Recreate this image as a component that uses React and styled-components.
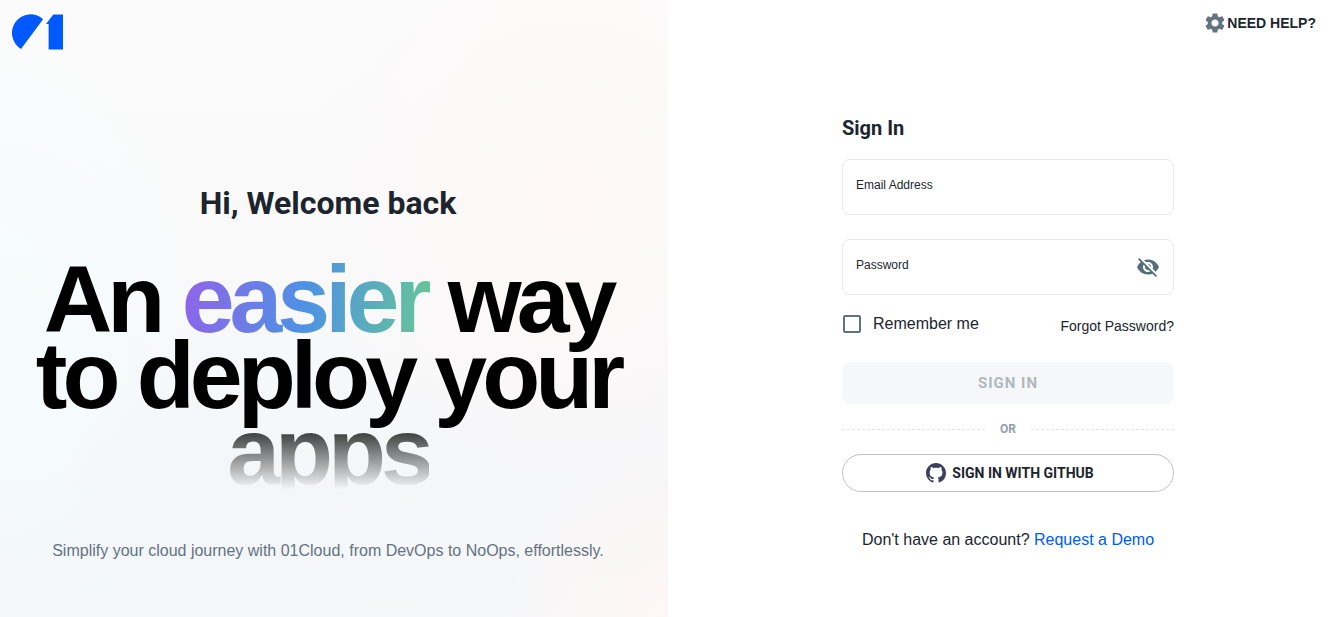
import React from "react";
import styled, { createGlobalStyle } from "styled-components";
import { MdSettings, MdVisibilityOff } from "react-icons/md";

const ink = "#1c252e";
const sans = '"Liberation Sans", Arial, sans-serif';
const display = 'Roboto, "Liberation Sans", sans-serif';

const GlobalStyle = createGlobalStyle`
  *, *::before, *::after { box-sizing: border-box; }
  body {
    margin: 0;
    background: #fff;
    color: ${ink};
    font-family: ${sans};
    font-size: 16px;
    line-height: 24px;
  }
  button, input { font: inherit; color: inherit; }
`;

const Page = styled.div`
  display: flex;
  min-height: 100vh;
`;

const Hero = styled.section`
  flex: 0 0 calc(50% + 4px);
  display: flex;
  flex-direction: column;
  padding: 12px;
  background:
    radial-gradient(ellipse 25% 30% at 100% 100%, #fdf7f5 0%, #fdf7f500 100%),
    radial-gradient(ellipse 40% 50% at 85% 32%, #fdf8f7 0%, #fdf8f700 100%),
    radial-gradient(ellipse 30% 50% at 0% 55%, #f5fcfd 0%, #f5fcfd00 100%),
    radial-gradient(ellipse 70% 50% at 15% 95%, #f2f7fa 0%, #f2f7fa00 100%),
    linear-gradient(180deg, #fbfbfb 0%, #f9f9fa 45%, #f5f6f8 80%, #f7f7f9 100%);
`;

const LogoLink = styled.a`
  display: block;
  height: 40px;
  svg { display: block; }
`;

const HeroBody = styled.div`
  padding: 127px 12px 0 0;
  text-align: center;
`;

const Welcome = styled.h2`
  margin: 0 0 34px;
  font: 700 32px/48px ${display};
`;

const Headline = styled.h1`
  margin: 0;
  color: #000;
  font: 700 95px/76px ${sans};
  letter-spacing: -5px;
  white-space: nowrap;
`;

const Line = styled.span`
  display: block;
`;

const Accent = styled.span`
  margin-right: -5px;
  padding-right: 5px;
  color: transparent;
  background: linear-gradient(100deg, #9560ea 0%, #4d92e4 50%, #69c893 100%);
  background-clip: text;
  -webkit-background-clip: text;
`;

const Fading = styled.span`
  display: inline-block;
  vertical-align: top;
  color: transparent;
  background: linear-gradient(180deg, #000 0%, #0000 100%);
  background-clip: text;
  -webkit-background-clip: text;
`;

const Tagline = styled.p`
  margin: 50px 0 0;
  color: #637381;
`;

const Panel = styled.main`
  flex: 1;
  display: flex;
  flex-direction: column;
  padding: 11px 12px 12px 32px;
`;

const HelpButton = styled.button`
  align-self: flex-end;
  display: flex;
  align-items: center;
  padding: 0;
  border: 0;
  background: none;
  font-weight: 700;
  font-size: 14px;
  line-height: 24px;
  cursor: pointer;
  svg { color: #637381; }
`;

const Form = styled.form`
  width: 332px;
  max-width: 100%;
  margin: 78px auto 0;
  display: flex;
  flex-direction: column;
`;

const Title = styled.h3`
  margin: 0 0 16px;
  font: 700 20px/30px ${display};
`;

const Field = styled.div`
  display: flex;
  align-items: center;
  height: 56px;
  padding: 0 13px;
  border: 1px solid #e8eaec;
  border-radius: 8px;
  & + & { margin-top: 24px; }
`;

const FieldText = styled.div`
  flex: 1;
  display: flex;
  flex-direction: column;
  padding-top: 16px;
  label { font-size: 12px; line-height: 18px; }
  input {
    height: 20px;
    padding: 0;
    border: 0;
    outline: 0;
    background: none;
    font-size: 14px;
  }
`;

const IconButton = styled.button`
  display: flex;
  padding: 0;
  border: 0;
  background: none;
  color: #546e7a;
  cursor: pointer;
`;

const Options = styled.div`
  display: flex;
  justify-content: space-between;
  align-items: center;
  margin-top: 15px;
`;

const Remember = styled.label`
  display: flex;
  align-items: center;
  gap: 12px;
`;

const Checkbox = styled.input`
  appearance: none;
  width: 18px;
  height: 18px;
  margin: 0 0 0 1px;
  border: 2px solid #637381;
  border-radius: 2px;
  &:checked { background: #637381; }
`;

const Forgot = styled.a`
  padding-top: 4px;
  color: ${ink};
  font-size: 14px;
  text-decoration: none;
`;

const Submit = styled.button`
  height: 42px;
  margin-top: 24px;
  border: 0;
  border-radius: 8px;
  background: #f5f7f9;
  color: #b1b7bd;
  font-family: ${display};
  font-weight: 700;
  font-size: 15px;
  letter-spacing: 1px;
`;

const Divider = styled.div`
  display: flex;
  align-items: center;
  gap: 15px;
  margin: 16px 0;
  color: #919eab;
  font: 700 12px/18px ${display};
  &::before, &::after {
    content: "";
    flex: 1;
    border-top: 1px dashed #e2e5e8;
  }
`;

const GithubButton = styled.button`
  display: flex;
  align-items: center;
  justify-content: center;
  gap: 6px;
  height: 38px;
  padding: 0 0 1px 4px;
  border: 1px solid #c0c2c4;
  border-radius: 19px;
  background: #fff;
  font-family: ${display};
  font-weight: 700;
  font-size: 14px;
  cursor: pointer;
`;

const Signup = styled.p`
  margin: 36px 0 0;
  text-align: center;
  a { color: #0059ff; text-decoration: none; }
`;

function Logo() {
  return (
    <svg width="52" height="40" viewBox="0 0 52 40" fill="#0059ff" aria-hidden="true">
      <path d="M31.1 7.2A18.6 18.6 0 1 0 9 36.9Z" />
      <path d="M41.3 2.5H51V37.5H36.6V12H34Z" />
    </svg>
  );
}

function GithubMark() {
  return (
    <svg width="20" height="20" viewBox="0 0 16 16" fill="#413f5c" aria-hidden="true">
      <path d="M8 0C3.58 0 0 3.58 0 8c0 3.54 2.29 6.53 5.47 7.59.4.07.55-.17.55-.38 0-.19-.01-.82-.01-1.49-2.01.37-2.53-.49-2.69-.94-.09-.23-.48-.94-.82-1.13-.28-.15-.68-.52-.01-.53.63-.01 1.08.58 1.23.82.72 1.21 1.87.87 2.33.66.07-.52.28-.87.51-1.07-1.78-.2-3.64-.89-3.64-3.95 0-.87.31-1.59.82-2.15-.08-.2-.36-1.02.08-2.12 0 0 .67-.21 2.2.82.64-.18 1.32-.27 2-.27s1.36.09 2 .27c1.53-1.04 2.2-.82 2.2-.82.44 1.1.16 1.92.08 2.12.51.56.82 1.27.82 2.15 0 3.07-1.87 3.75-3.65 3.95.29.25.54.73.54 1.48 0 1.07-.01 1.93-.01 2.2 0 .21.15.46.55.38A8.01 8.01 0 0 0 16 8c0-4.42-3.58-8-8-8Z" />
    </svg>
  );
}

export default function App() {
  return (
    <>
      <GlobalStyle />
      <Page>
        <Hero>
          <LogoLink href="#" aria-label="01Cloud"><Logo /></LogoLink>
          <HeroBody>
            <Welcome>Hi, Welcome back</Welcome>
            <Headline>
              <Line>An <Accent>easier</Accent> way</Line>
              <Line>to deploy your</Line>
              <Line><Fading>apps</Fading></Line>
            </Headline>
            <Tagline>Simplify your cloud journey with 01Cloud, from DevOps to NoOps, effortlessly.</Tagline>
          </HeroBody>
        </Hero>
        <Panel>
          <HelpButton type="button"><MdSettings size={24} />NEED HELP?</HelpButton>
          <Form onSubmit={(event) => event.preventDefault()}>
            <Title>Sign In</Title>
            <Field>
              <FieldText>
                <label htmlFor="email">Email Address</label>
                <input id="email" type="email" />
              </FieldText>
            </Field>
            <Field>
              <FieldText>
                <label htmlFor="password">Password</label>
                <input id="password" type="password" />
              </FieldText>
              <IconButton type="button" aria-label="Show password"><MdVisibilityOff size={24} /></IconButton>
            </Field>
            <Options>
              <Remember><Checkbox type="checkbox" />Remember me</Remember>
              <Forgot href="#">Forgot Password?</Forgot>
            </Options>
            <Submit type="submit" disabled>SIGN IN</Submit>
            <Divider>OR</Divider>
            <GithubButton type="button"><GithubMark />SIGN IN WITH GITHUB</GithubButton>
            <Signup>Don't have an account? <a href="#">Request a Demo</a></Signup>
          </Form>
        </Panel>
      </Page>
    </>
  );
}
